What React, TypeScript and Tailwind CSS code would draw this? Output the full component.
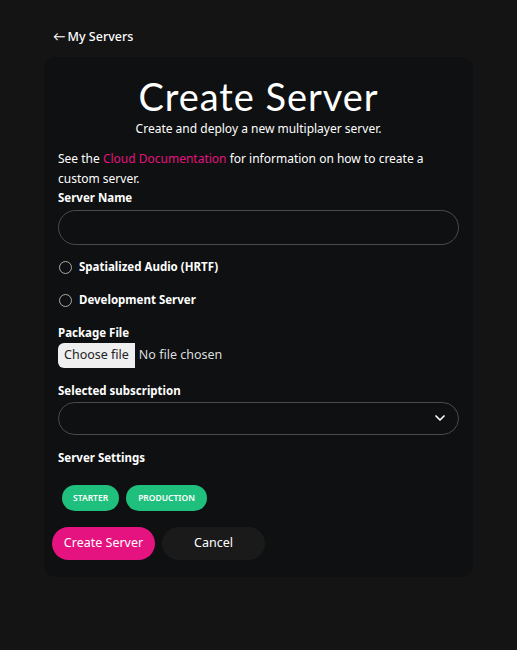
import { ChevronDown } from "lucide-react";

export default function App() {
  const font = { fontFamily: "'Noto Sans', Lato, sans-serif" };
  return (
    <div className="min-h-[650px] w-[517px] bg-[#141414] text-white" style={font}>
      <div className="px-[44px] pt-[29px]">
        <a className="flex items-center gap-0.5 pl-[9px] text-[12.5px] font-medium leading-[16px] text-white">
          <span>←</span>My Servers
        </a>
        <div className="mt-[12px] rounded-xl bg-[#0e1011] px-[14px] pb-[17px] pt-[16px]">
          <h1 className="text-center text-[38px] font-normal leading-[46px] tracking-wide" style={{ fontFamily: "Lato, sans-serif" }}>Create Server</h1>
          <p className="mt-[2px] text-center text-[12px] leading-[16px] text-white">Create and deploy a new multiplayer server.</p>
          <p className="mt-[12px] text-[12px] leading-[20px]">
            See the <span className="text-[#e5137f]">Cloud Documentation</span> for information on how to create a custom server.
          </p>
          <div className="mt-[1px] text-[11.5px] font-bold leading-[16px]">Server Name</div>
          <div className="mt-[4px] h-[35px] rounded-full border border-[#4b4b4b]" />
          <label className="mt-[14px] flex items-center gap-[7px] text-[11.5px] font-bold leading-[16px]">
            <span className="ml-[1px] h-[13px] w-[13px] rounded-full border border-[#aaa]" />Spatialized Audio (HRTF)
          </label>
          <label className="mt-[17px] flex items-center gap-[7px] text-[11.5px] font-bold leading-[16px]">
            <span className="ml-[1px] h-[13px] w-[13px] rounded-full border border-[#aaa]" />Development Server
          </label>
          <div className="mt-[17px] text-[11.5px] font-bold leading-[16px]">Package File</div>
          <div className="mt-[2px] flex items-center text-[12.5px]">
            <span className="rounded-l-md bg-[#efefef] px-[6px] py-[3px] text-[#222]">Choose file</span>
            <span className="ml-[4px] text-[#ddd]">No file chosen</span>
          </div>
          <div className="mt-[15px] text-[11.5px] font-bold leading-[16px]">Selected subscription</div>
          <div className="mt-[3px] flex h-[33px] items-center justify-end rounded-full border border-[#4b4b4b] pr-[10px]">
            <ChevronDown className="h-4 w-4" strokeWidth={2.5} />
          </div>
          <div className="mt-[15px] text-[11.5px] font-bold leading-[16px]">Server Settings</div>
          <div className="mt-[19px] flex gap-[7px] pl-[4px]">
            <span className="rounded-full bg-[#1fbf7d] px-[11px] py-[6px] text-[8.5px] font-semibold leading-[14px]">STARTER</span>
            <span className="rounded-full bg-[#1fbf7d] px-[12px] py-[6px] text-[8.5px] font-semibold leading-[14px]">PRODUCTION</span>
          </div>
          <div className="-ml-[6px] mt-[16px] flex gap-[7px]">
            <button className="h-[33px] w-[103px] rounded-full bg-[#e5137f] text-[12.5px]">Create Server</button>
            <button className="h-[33px] w-[103px] rounded-full bg-[#1a1a1a] text-[12.5px]">Cancel</button>
          </div>
        </div>
      </div>
    </div>
  );
}
